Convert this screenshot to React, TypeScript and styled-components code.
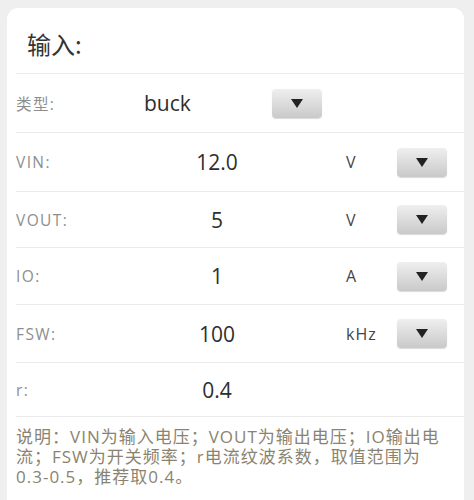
import React from "react";
import styled, { createGlobalStyle } from "styled-components";

const Global = createGlobalStyle`
  html, body { margin: 0; padding: 0; background: #efefef; }
  body { font-family: "Open Sans", Roboto, "Noto Sans CJK SC", sans-serif; }
  * { box-sizing: border-box; }
`;

const Page = styled.div`
  padding: 8px 10px 0 7px;
  height: 500px;
  overflow: hidden;
`;

const Card = styled.div`
  background: #fff;
  border-radius: 11px 11px 0 0;
  padding-left: 9px;
  min-height: 520px;
`;

const Title = styled.div`
  height: 66px;
  display: flex;
  align-items: center;
  padding-left: 11px;
  padding-top: 6px;
  border-bottom: 1px solid #ebebeb;
  font-family: "Noto Sans CJK SC", sans-serif;
  font-size: 24px;
  color: #333;
`;

const Row = styled.div<{ $h: number }>`
  height: ${(p) => p.$h}px;
  display: grid;
  grid-template-columns: 128px 146px 56px 51px 50px;
  align-items: center;
  border-bottom: 1px solid #ebebeb;
`;

const TypeRow = styled.div`
  height: 59px;
  display: grid;
  grid-template-columns: 128px 128px 50px;
  align-items: center;
  border-bottom: 1px solid #ebebeb;
`;

const Label = styled.span`
  font-family: "Open Sans", "Noto Sans CJK SC", sans-serif;
  font-size: 15.5px;
  letter-spacing: 1.4px;
  color: #8e8e8e;
`;

const Value = styled.span<{ $align?: string }>`
  font-family: "Open Sans", sans-serif;
  font-size: 21px;
  color: #2e2e2e;
  text-align: ${(p) => p.$align || "center"};
`;

const Unit = styled.span`
  grid-column: 4;
  font-family: "Open Sans", sans-serif;
  font-size: 16px;
  letter-spacing: 1px;
  color: #444;
`;

const DropButton = styled.div<{ $col?: number }>`
  grid-column: ${(p) => p.$col || 5};
  width: 50px;
  height: 29px;
  border-radius: 4px;
  background: linear-gradient(#efefef, #c9c9c9);
  box-shadow: 0 1px 1px rgba(0, 0, 0, 0.15);
  display: flex;
  align-items: center;
  justify-content: center;
`;

const Note = styled.div`
  padding: 10px 0 0 0;
  width: 432px;
  font-family: "Open Sans", "Noto Sans CJK SC", sans-serif;
  font-size: 17px;
  letter-spacing: 1px;
  line-height: 20px;
  color: #8b836f;
`;

const Arrow = () => (
  <svg width="12" height="9" viewBox="0 0 12 9">
    <path d="M0 0 H12 L6 9 Z" fill="#222" />
  </svg>
);

const rows = [
  { label: "VIN:", value: "12.0", unit: "V", h: 59 },
  { label: "VOUT:", value: "5", unit: "V", h: 56 },
  { label: "IO:", value: "1", unit: "A", h: 57 },
  { label: "FSW:", value: "100", unit: "kHz", h: 58 },
];

export default function App() {
  return (
    <>
      <Global />
      <Page>
        <Card>
          <Title>输入:</Title>
          <TypeRow>
            <Label>类型:</Label>
            <Value $align="left">buck</Value>
            <DropButton $col={3}>
              <Arrow />
            </DropButton>
          </TypeRow>
          {rows.map((r) => (
            <Row key={r.label} $h={r.h}>
              <Label>{r.label}</Label>
              <Value>{r.value}</Value>
              <Unit>{r.unit}</Unit>
              <DropButton>
                <Arrow />
              </DropButton>
            </Row>
          ))}
          <Row $h={54}>
            <Label>r:</Label>
            <Value>0.4</Value>
          </Row>
          <Note>
            说明：VIN为输入电压；VOUT为输出电压；IO输出电流；FSW为开关频率；r电流纹波系数，取值范围为0.3-0.5，推荐取0.4。
          </Note>
        </Card>
      </Page>
    </>
  );
}
